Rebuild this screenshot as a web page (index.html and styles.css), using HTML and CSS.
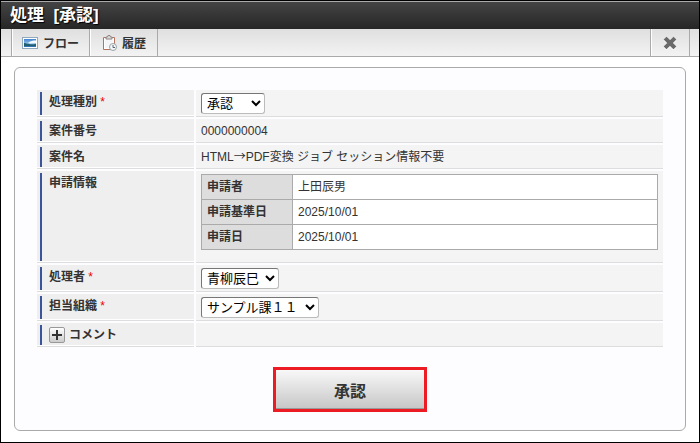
FILE: index.html
```
<!DOCTYPE html>
<html lang="ja">
<head>
    <meta charset="UTF-8">
    <title>処理 [承認]</title>
    <link rel="stylesheet" href="styles.css">
</head>
<body>
    <header class="title-bar">
        <h1>処理&nbsp; [承認]</h1>
    </header>
    <div class="toolbar">
        <button type="button" class="tool">
            <svg class="icon" width="16" height="16" viewBox="0 0 16 16">
                <defs>
                    <linearGradient id="sky" x1="0" y1="0" x2="0" y2="1">
                        <stop offset="0" stop-color="#3f82d0"/>
                        <stop offset="1" stop-color="#d3efff"/>
                    </linearGradient>
                </defs>
                <rect x="0.5" y="2.5" width="15" height="11" fill="#fff" stroke="#91a9bc"/>
                <rect x="2" y="4" width="12" height="8" fill="url(#sky)"/>
                <path d="M2 8c3 0 4 2 12 1v3H2z" fill="#1f5f70"/>
                <path d="M2 11h12v1H2z" fill="#2f74b5"/>
                <path d="M6 8c2-2 5-2.500 8-2.500V8c-3 0-5 1-8 0z" fill="#f2fbff"/>
            </svg>
            フロー
        </button>
        <button type="button" class="tool">
            <svg class="icon" width="16" height="16" viewBox="0 0 16 16">
                <path d="M2.500 2.500h11v12h-11z" fill="#fff" stroke="#b5725a"/>
                <path d="M4 4h8v9H4z" fill="#f3f5f7"/>
                <path d="M5 4V2h1.500L7 .5h2L9.500 2H11v2z" fill="#ddd" stroke="#8c8583"/>
                <circle cx="12" cy="12" r="3.500" fill="#f4f6f7" stroke="#9ba4a8"/>
                <path d="M12 10v2.500h2" fill="none" stroke="#53646e"/>
            </svg>
            履歴
        </button>
        <button type="button" class="tool tool-close" aria-label="閉じる">
            <svg width="14" height="14" viewBox="0 0 14 14">
                <path d="M3.500 4.500l7 7M10.500 4.500l-7 7" stroke="#fff" stroke-width="4" stroke-linecap="square"/>
                <path d="M3.500 3.500l7 7M10.500 3.500l-7 7" stroke="#6a6a6a" stroke-width="4" stroke-linecap="square"/>
            </svg>
        </button>
    </div>

    <form class="panel">
        <table class="form-table">
            <tr class="tall">
                <th><div class="label"><label for="type">処理種別</label> <span class="required">*</span></div></th>
                <td>
                    <select id="type" class="select-type">
                        <option>承認</option>
                    </select>
                </td>
            </tr>
            <tr>
                <th><div class="label">案件番号</div></th>
                <td>0000000004</td>
            </tr>
            <tr>
                <th><div class="label">案件名</div></th>
                <td>HTML<span class="arrow">→</span>PDF変換 ジョブ セッション情報不要</td>
            </tr>
            <tr class="info">
                <th><div class="label">申請情報</div></th>
                <td>
                    <table class="info-table">
                        <tr>
                            <th>申請者</th>
                            <td>上田辰男</td>
                        </tr>
                        <tr>
                            <th>申請基準日</th>
                            <td>2025/10/01</td>
                        </tr>
                        <tr>
                            <th>申請日</th>
                            <td>2025/10/01</td>
                        </tr>
                    </table>
                </td>
            </tr>
            <tr class="tall">
                <th><div class="label"><label for="user">処理者</label> <span class="required">*</span></div></th>
                <td>
                    <select id="user" class="select-user">
                        <option>青柳辰巳</option>
                    </select>
                </td>
            </tr>
            <tr class="tall">
                <th><div class="label"><label for="dept">担当組織</label> <span class="required">*</span></div></th>
                <td>
                    <select id="dept" class="select-dept">
                        <option>サンプル課１１</option>
                    </select>
                </td>
            </tr>
            <tr>
                <th>
                    <div class="label comment">
                        <button type="button" class="expand" aria-label="コメントを開く">
                            <svg width="10" height="10" viewBox="0 0 10 10"><path d="M5 0v10M0 5h10" stroke="#333" stroke-width="2"/></svg>
                        </button>
                        コメント
                    </div>
                </th>
                <td></td>
            </tr>
        </table>
        <div class="actions">
            <button type="button" class="submit">承認</button>
        </div>
    </form>
</body>
</html>
```

FILE: styles.css
```
* {
    box-sizing: border-box;
}
body {
    margin: 0;
    min-height: 100vh;
    border: 1px solid #000;
    background-color: #fff;
    color: #333;
    font-family: "Liberation Sans", "Noto Sans CJK JP", sans-serif;
    font-size: 12px;
    line-height: 18px;
}
button,
select {
    font-family: inherit;
    color: inherit;
}
.title-bar {
    height: 28px;
    padding-left: 9px;
    border-top: 1px solid #aaa;
    background: linear-gradient(#444, #262626);
}
h1 {
    margin: 0;
    color: #fff;
    font-size: 17px;
    line-height: 28px;
    text-shadow: 1px 1px 1px #000;
}
.toolbar {
    display: flex;
    height: 28px;
    padding: 0 9px 0 10px;
    border-bottom: 1px solid #aaa;
    background: linear-gradient(#dfdfdf, #f3f3f3);
}
.tool {
    display: flex;
    align-items: center;
    gap: 5px;
    padding: 0 10px;
    border: 0;
    border-left: 1px solid #aaa;
    box-shadow: inset 1px 0 #fff;
    background: none;
    font-size: 12px;
    font-weight: bold;
}
.tool + .tool {
    padding: 0 11px;
    border-right: 1px solid #aaa;
}
.tool.tool-close {
    margin-left: auto;
    padding: 0 12px;
}
.panel {
    margin: 10px 13px 11px;
    padding: 20px 20px 18px;
    border: 1px solid #aaa;
    border-radius: 6px;
    background-color: #fdfdff;
}
.form-table {
    width: 100%;
    border-spacing: 2px;
    table-layout: fixed;
}
.form-table tr {
    height: 24px;
}
.form-table .tall {
    height: 27px;
}
.form-table .info {
    height: 92px;
}
.form-table th {
    width: 157px;
    padding: 2px 0 1px 3px;
    border-bottom: 1px solid #ddd;
    background: linear-gradient(#fff, #fff) bottom / 100% 1px no-repeat #efefef;
    background-clip: padding-box;
    text-align: left;
    vertical-align: top;
}
.label {
    height: 20px;
    padding-left: 7px;
    border-left: 2px solid #3a5599;
    line-height: 20px;
}
.tall .label {
    height: 23px;
}
.info .label {
    height: 88px;
}
.comment {
    display: flex;
    align-items: center;
    gap: 4px;
}
.required {
    color: #e00;
    font-weight: normal;
}
.form-table td {
    padding: 0 5px;
    border-bottom: 1px solid #ddd;
    background-color: #f4f4f4;
}
.form-table .info > td {
    padding-top: 3px;
    vertical-align: top;
}
.form-table .info-table {
    width: 100%;
    border-collapse: collapse;
}
.form-table .info-table tr {
    height: 25px;
}
.form-table .info-table th {
    width: 91px;
    padding: 0 5px;
    border: 1px solid #aaa;
    background: #ddd;
    vertical-align: middle;
}
.form-table .info-table td {
    border: 1px solid #aaa;
    background-color: #fff;
}
.arrow {
    font-family: "Noto Sans CJK JP", sans-serif;
    line-height: 1;
}
select {
    display: block;
    height: 21px;
    padding: 0 1px;
    border: 1px solid #bbb;
    border-top-color: #767676;
    border-left-color: #767676;
    border-radius: 3px;
    background-color: #fff;
    color: #000;
    font-size: 13px;
}
.select-type {
    width: 64px;
}
.select-user {
    width: 78px;
}
.select-dept {
    width: 118px;
}
.expand {
    display: flex;
    align-items: center;
    justify-content: center;
    width: 16px;
    height: 16px;
    padding: 0;
    border: 1px solid #999;
    border-radius: 2px;
    background: linear-gradient(#fff, #ccc);
}
.actions {
    display: flex;
    justify-content: center;
    padding-top: 18px;
}
.submit {
    width: 154px;
    height: 45px;
    border: 3px solid #ed1c24;
    background: linear-gradient(#f8f8f8, #c6c6c6);
    box-shadow: inset 0 -1px #999;
    font-size: 16px;
    font-weight: bold;
}
```
